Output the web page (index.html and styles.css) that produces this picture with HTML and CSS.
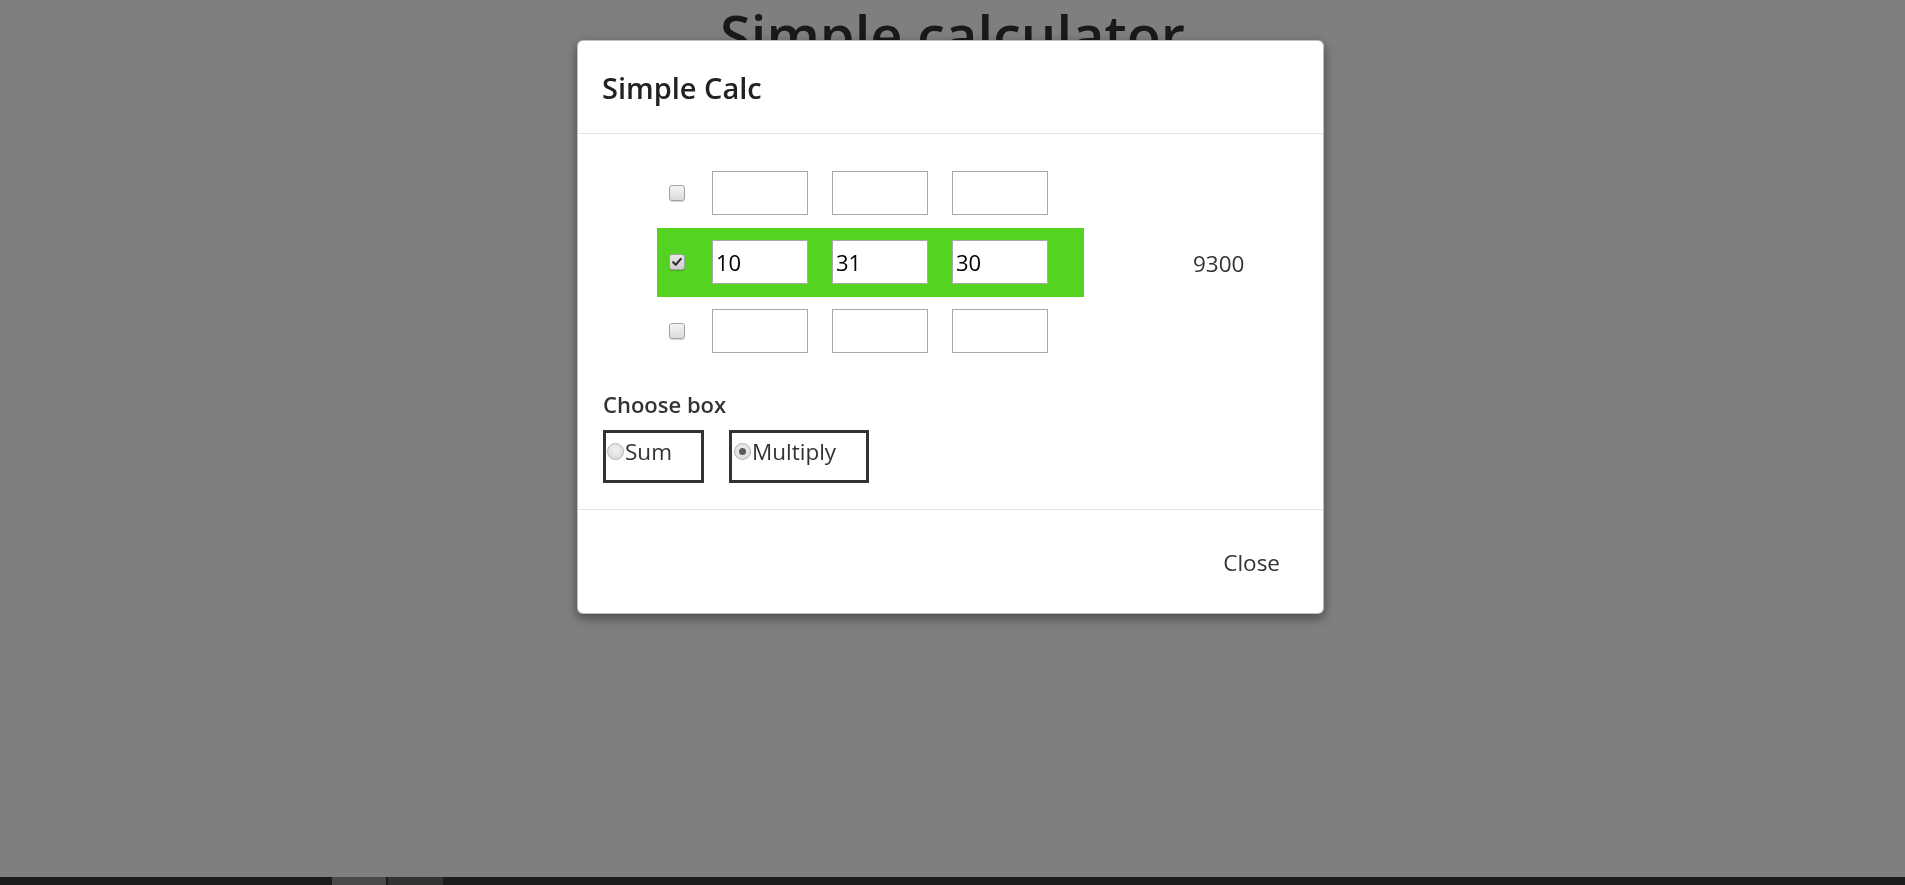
FILE: index.html
```html
<!DOCTYPE html>
<html lang="en">
<head>
<meta charset="utf-8">
<title>Simple calculator</title>
<link rel="stylesheet" href="styles.css">
</head>
<body>
<h1 class="page-title">Simple calculator</h1>

<div class="overlay">
  <div class="modal">
    <div class="modal-header">
      <h4 class="modal-title">Simple Calc</h4>
    </div>
    <div class="modal-body">
      <div class="rows">
        <div class="line">
          <div class="row">
            <span class="check"></span>
            <input class="num" type="text" value="">
            <input class="num" type="text" value="">
            <input class="num" type="text" value="">
          </div>
        </div>
        <div class="line">
          <div class="row row-active">
            <span class="check checked"><svg viewBox="0 0 16 16" width="14" height="14"><path d="M3.6 8.2 L6.6 11.2 L12.4 4.4" fill="none" stroke="#2e2e2e" stroke-width="2.4" stroke-linecap="round" stroke-linejoin="round"/></svg></span>
            <input class="num" type="text" value="10">
            <input class="num" type="text" value="31">
            <input class="num" type="text" value="30">
          </div>
          <div class="result">9300</div>
        </div>
        <div class="line">
          <div class="row">
            <span class="check"></span>
            <input class="num" type="text" value="">
            <input class="num" type="text" value="">
            <input class="num" type="text" value="">
          </div>
        </div>
      </div>
      <div class="choose-label">Choose box</div>
      <div class="options">
        <label class="opt"><span class="radio"></span><span class="opt-text">Sum</span></label>
        <label class="opt"><span class="radio checked"><span class="dot"></span></span><span class="opt-text">Multiply</span></label>
      </div>
    </div>
    <div class="modal-footer">
      <button class="btn-close" type="button">Close</button>
    </div>
  </div>
  <div class="bottom-bar">
    <span class="seg seg-a"></span><span class="seg seg-b"></span>
  </div>
</div>
</body>
</html>
```

FILE: styles.css
```css
html, body {
  margin: 0;
  padding: 0;
}
body {
  background: #ffffff;
  font-family: "Open Sans", "Noto Sans", sans-serif;
  color: #333333;
  width: 1905px;
  height: 885px;
  overflow: hidden;
}
.page-title {
  margin: 5px 0 0 0;
  font-size: 56px;
  line-height: 58px;
  font-weight: 600;
  text-align: center;
  color: #333333;
}
.overlay {
  position: fixed;
  left: 0;
  top: 0;
  right: 0;
  bottom: 0;
  background: rgba(0, 0, 0, 0.5);
  display: flex;
  flex-direction: column;
}
.modal {
  box-sizing: border-box;
  width: 747px;
  margin-top: 40px;
  margin-left: calc(50% - 375.5px);
  background: #ffffff;
  border: 1px solid rgba(0, 0, 0, 0.25);
  border-radius: 6px;
  box-shadow: 0 4px 12px rgba(0, 0, 0, 0.45);
}
.modal-header {
  padding: 30px 24px 29px 24px;
  border-bottom: 1px solid #e2e4e5;
}
.modal-title {
  margin: 0;
  font-size: 29px;
  line-height: 33px;
  font-weight: 600;
  color: #222222;
}
.modal-body {
  padding: 25px 25px 26px 25px;
}
.rows {
  margin-left: 54px;
  display: flex;
  flex-direction: column;
}
.line {
  display: flex;
  align-items: center;
}
.row {
  box-sizing: border-box;
  width: 427px;
  height: 69px;
  padding: 12px 36px 13px 12px;
  display: flex;
  align-items: center;
  gap: 24px;
}
.row-active {
  background: #55d322;
}
.check {
  box-sizing: border-box;
  width: 16px;
  height: 16px;
  margin-right: 3px;
  border: 1px solid #a3a3a3;
  border-radius: 3px;
  background: linear-gradient(#f4f4f4, #dcdcdc);
  box-shadow: 0 1px 1px rgba(0, 0, 0, 0.18);
  display: flex;
  align-items: center;
  justify-content: center;
  flex: none;
}
.check.checked {
  background: linear-gradient(#e6e6e6, #cfcfcf);
}
.num {
  box-sizing: border-box;
  width: 96px;
  height: 44px;
  margin: 0;
  padding: 0 3px;
  border: 1px solid #a9a9a9;
  border-radius: 0;
  background: #ffffff;
  font-family: "Open Sans", "Noto Sans", sans-serif;
  font-size: 22px;
  color: #000000;
  outline: none;
}
.result {
  margin-left: 109px;
  padding-top: 3px;
  font-size: 22.5px;
  line-height: 32px;
  color: #333333;
}
.choose-label {
  margin-top: 22px;
  font-size: 22px;
  line-height: 32px;
  font-weight: 600;
  color: #333333;
}
.options {
  margin-top: 10px;
  display: flex;
  gap: 25px;
}
.opt {
  box-sizing: border-box;
  height: 53px;
  border: 3px solid #333333;
  padding: 3px 29px 12px 1px;
  display: flex;
  align-items: flex-start;
  font-size: 22.5px;
  line-height: 32px;
  color: #333333;
}
.opt + .opt {
  padding-left: 2px;
  padding-right: 30px;
}
.radio {
  box-sizing: border-box;
  width: 17px;
  height: 17px;
  margin-top: 7px;
  margin-right: 1px;
  border: 1px solid #b3b3b3;
  border-radius: 50%;
  background: radial-gradient(circle at 50% 40%, #f2f2f2, #d4d4d4);
  display: flex;
  align-items: center;
  justify-content: center;
  flex: none;
}
.radio .dot {
  width: 7px;
  height: 7px;
  border-radius: 50%;
  background: #5a5a5a;
}
.modal-footer {
  border-top: 1px solid #e2e4e5;
  padding: 37px 24px 34px 0;
  display: flex;
  justify-content: flex-end;
}
.btn-close {
  margin: 0;
  padding: 0 19px;
  border: none;
  background: transparent;
  font-family: "Open Sans", "Noto Sans", sans-serif;
  font-size: 22.5px;
  line-height: 32px;
  color: #333333;
}
.bottom-bar {
  margin-top: auto;
  height: 8px;
  background: #1c1c1c;
  display: flex;
}
.seg {
  height: 8px;
}
.seg-a {
  margin-left: 332px;
  width: 54px;
  background: #4a4a4a;
}
.seg-b {
  margin-left: 2px;
  width: 55px;
  background: #333333;
}
```
